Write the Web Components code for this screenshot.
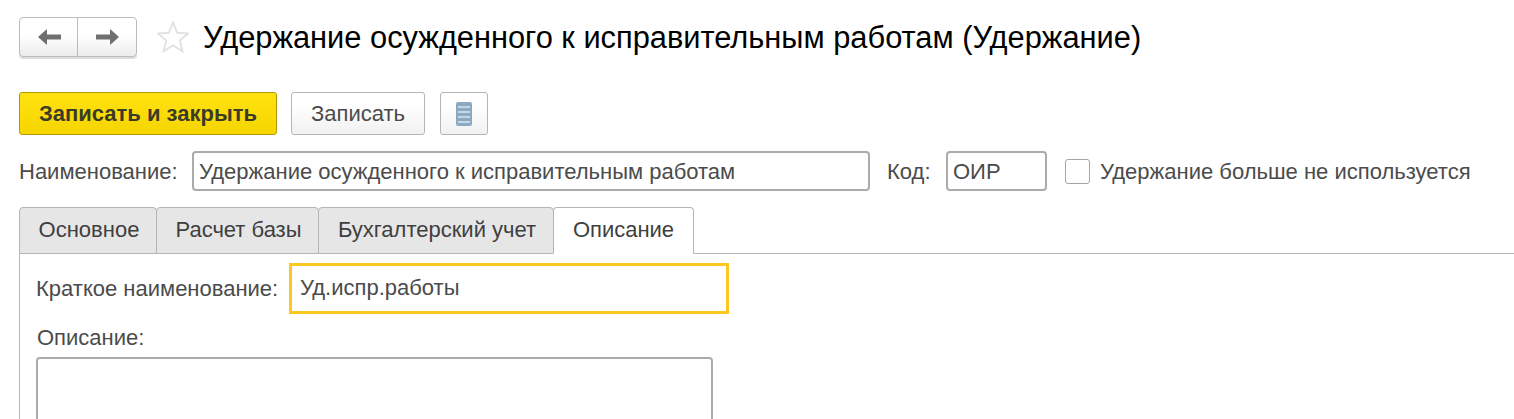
<!DOCTYPE html>
<html lang="ru">
<head>
<meta charset="utf-8">
<title>Удержание</title>
<style>
html,body{margin:0;height:419px;overflow:hidden;background:#fff;font:22px/26px "Liberation Sans",Arial,sans-serif;color:#4b4b4b}
</style>
</head>
<body>
<u-form></u-form>
<script>
// small helper, every element just sets its shadow html once
class Base extends HTMLElement {
    constructor() {
        super();
        this.r = this.attachShadow({ mode: 'open' });
    }
    connectedCallback() {
        this.r.innerHTML = this.html();
    }
}

customElements.define('u-nav', class extends Base {
    html() {
        return `<style>
:host{display:flex;width:118px;height:40px;box-sizing:border-box;border:1px solid #bcbcbc;border-radius:4px;box-shadow:0 2px 0 #dcdcdc;background:linear-gradient(#fff 45%,#ececec)}
div{display:flex;align-items:center;justify-content:center;width:57px}
div+div{flex:1;border-left:1px solid #bcbcbc}
svg{width:24px;height:18px;display:block}
</style>
<div><svg viewBox="0 0 24 18"><path d="M1 9 10 1v5.5h14v5H10V17z" fill="#6f6f6f"/></svg></div>
<div><svg viewBox="0 0 24 18"><path d="M24 9 15 1v5.5H1v5h14V17z" fill="#6f6f6f"/></svg></div>`;
    }
});

customElements.define('u-star', class extends Base {
    html() {
        return `<style>:host{display:block;width:32px;height:32px}svg{display:block}</style>
<svg width="32" height="32" viewBox="0 0 32 32"><path d="M16 1.5l4.2 10.2 10.8.8-8.2 7 2.6 10.7L16 24.5l-9.4 5.7 2.6-10.7-8.2-7 10.8-.8z" fill="#fff" stroke="#e3e3e3" stroke-width="2"/></svg>`;
    }
});

customElements.define('u-btn', class extends Base {
    html() {
        return `<style>
:host{display:flex;align-items:center;justify-content:center;box-sizing:border-box;height:43px;border:1px solid #b5b5b5;border-radius:3px;background:linear-gradient(#fff 30%,#f1f1f1);color:#4b4b4b;font-size:22px}
:host([main]){border-color:#b39a00;background:linear-gradient(#ffe20f,#f6d500);color:#3c3b28;font-weight:bold}
</style><slot></slot>`;
    }
});

customElements.define('u-field', class extends Base {
    html() {
        return `<style>
:host{display:flex;align-items:center;box-sizing:border-box;height:40px;padding:2px 5px 0;border:2px solid #ababab;border-radius:4px;background:#fff;color:#4b4b4b;white-space:nowrap}
:host([focus]){height:51px;padding:0 8px 2px;border:3px solid #fac81e;border-radius:0}
</style><slot></slot>`;
    }
});

customElements.define('u-tab', class extends Base {
    html() {
        return `<style>
:host{display:flex;align-items:center;justify-content:center;box-sizing:border-box;height:47px;padding:0 0 1px 2px;margin-left:-1px;border:1px solid #b5b5b5;border-radius:4px 4px 0 0;background:#e6e6e6;color:#3f3f3f;font-size:22px}
:host([on]){padding-left:0;background:#fff;border-bottom-color:#fff;position:relative;z-index:1}
:host(:first-child){margin-left:0}
</style><slot></slot>`;
    }
});

customElements.define('u-form', class extends Base {
    html() {
        return `<style>
:host{display:block;box-sizing:border-box;height:419px;overflow:hidden;padding:16px 0 0 19px}
.head{display:flex;align-items:center;height:42px}
u-star{margin:0 14px 0 20px}
h1{margin:0;padding-top:2px;font:30.8px/40px "Liberation Sans",Arial,sans-serif;color:#000;white-space:nowrap}
.bar{display:flex;gap:14px;margin-top:34px;align-items:center}
.line{display:flex;align-items:center;margin-top:16px;height:40px;white-space:nowrap}
.line span{padding-top:2px}
.box{width:25px;height:25px;box-sizing:border-box;border:1px solid #a5a5a5;border-radius:3px;margin:0 10px 0 18px}
.tabs{display:flex;margin-top:16px}
.panel{border-left:1px solid #b5b5b5;border-top:1px solid #b5b5b5;margin-top:-1px;padding:9px 0 0 17px}
.row{display:flex;align-items:center;margin-left:-1px}
.row span{width:253px;white-space:nowrap}
.cap{margin-top:11px}
.area{width:677px;height:90px;box-sizing:border-box;margin:6px 0 0 -1px;border:2px solid #ababab;border-radius:4px}
svg{display:block}
</style>
<div class="head"><u-nav></u-nav><u-star></u-star><h1>Удержание осужденного к исправительным работам (Удержание)</h1></div>
<div class="bar">
<u-btn main style="width:258px">Записать и закрыть</u-btn>
<u-btn style="width:134px">Записать</u-btn>
<u-btn style="width:48px;margin-left:1px"><svg width="16" height="24" viewBox="0 0 16 24"><rect width="16" height="24" rx="2" fill="#8ba9c4"/><path d="M2 5h12M2 10h12M2 15h12M2 20h12" stroke="#dce6ee" stroke-width="1.5"/></svg></u-btn>
</div>
<div class="line">
<span style="width:173px">Наименование:</span>
<u-field style="width:678px">Удержание осужденного к исправительным работам</u-field>
<span style="width:43px;margin:0 16px 0 17px">Код:</span>
<u-field style="width:101px">ОИР</u-field>
<div class="box"></div>
<span>Удержание больше не используется</span>
</div>
<div class="tabs">
<u-tab style="width:138px">Основное</u-tab>
<u-tab style="width:163px">Расчет базы</u-tab>
<u-tab style="width:236px">Бухгалтерский учет</u-tab>
<u-tab on style="width:141px">Описание</u-tab>
</div>
<div class="panel">
<div class="row"><span>Краткое наименование:</span><u-field focus style="width:440px">Уд.испр.работы</u-field></div>
<div class="cap">Описание:</div>
<div class="area"></div>
</div>`;
    }
});
</script>
</body>
</html>
